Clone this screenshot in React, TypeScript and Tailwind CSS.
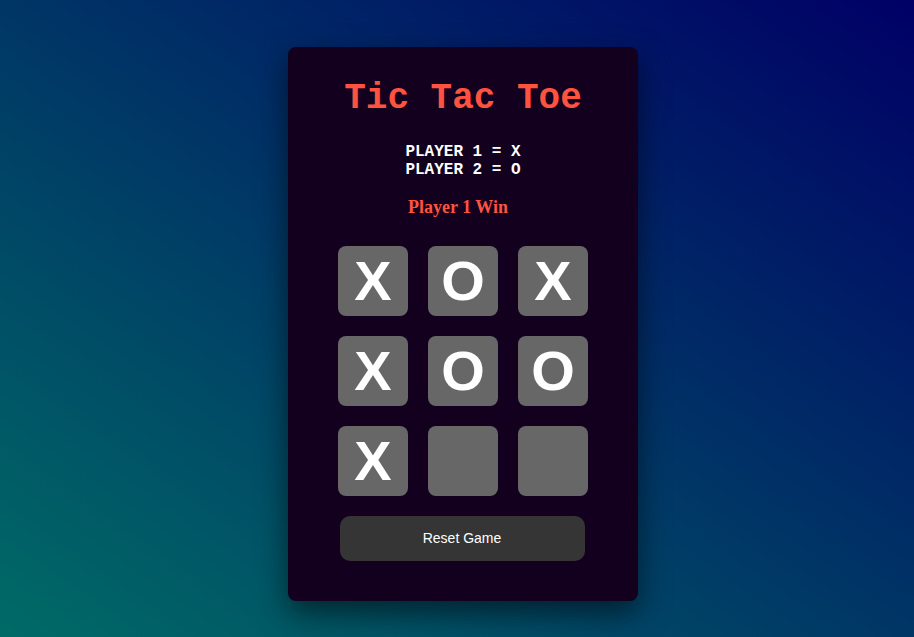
const cells = ["X", "O", "X", "X", "O", "O", "X", "", ""]

export default function App() {
  return (
    <div className="min-h-screen w-full flex items-center justify-center pl-[12px] pt-[11px] bg-[linear-gradient(to_top_right,#006b66,#000066)]">
      <div className="w-[350px] h-[554px] rounded-lg bg-[#13001e] shadow-[0_12px_30px_rgba(0,0,0,0.55)] flex flex-col items-center pt-[32px]">
        <h1 className="text-[36px] leading-[40px] font-bold text-[#ff5340] font-['Courier_New','Liberation_Mono',monospace]">
          Tic Tac Toe
        </h1>
        <div className="mt-[24px] text-[16px] leading-[18px] font-bold text-white font-['Courier_New','Liberation_Mono',monospace]">
          <p>PLAYER 1 = X</p>
          <p>PLAYER 2 = O</p>
        </div>
        <p className="mt-[15px] pr-[10px] text-[18px] font-bold text-[#ff5340] font-['Times_New_Roman','Liberation_Serif',serif]">
          Player 1 Win
        </p>
        <div className="mt-[25px] grid grid-cols-[repeat(3,70px)] gap-[20px]">
          {cells.map((c, i) => (
            <div
              key={i}
              className="w-[70px] h-[70px] rounded-lg bg-[#676767] flex items-center justify-center text-white text-[56px] font-bold font-['Arial','Liberation_Sans',sans-serif] leading-none"
            >
              {c}
            </div>
          ))}
        </div>
        <button className="mt-[20px] mr-[2px] w-[245px] h-[45px] shrink-0 rounded-[10px] bg-[#353535] text-white text-[14px] font-['Arial','Liberation_Sans',sans-serif]">
          Reset Game
        </button>
      </div>
    </div>
  )
}
